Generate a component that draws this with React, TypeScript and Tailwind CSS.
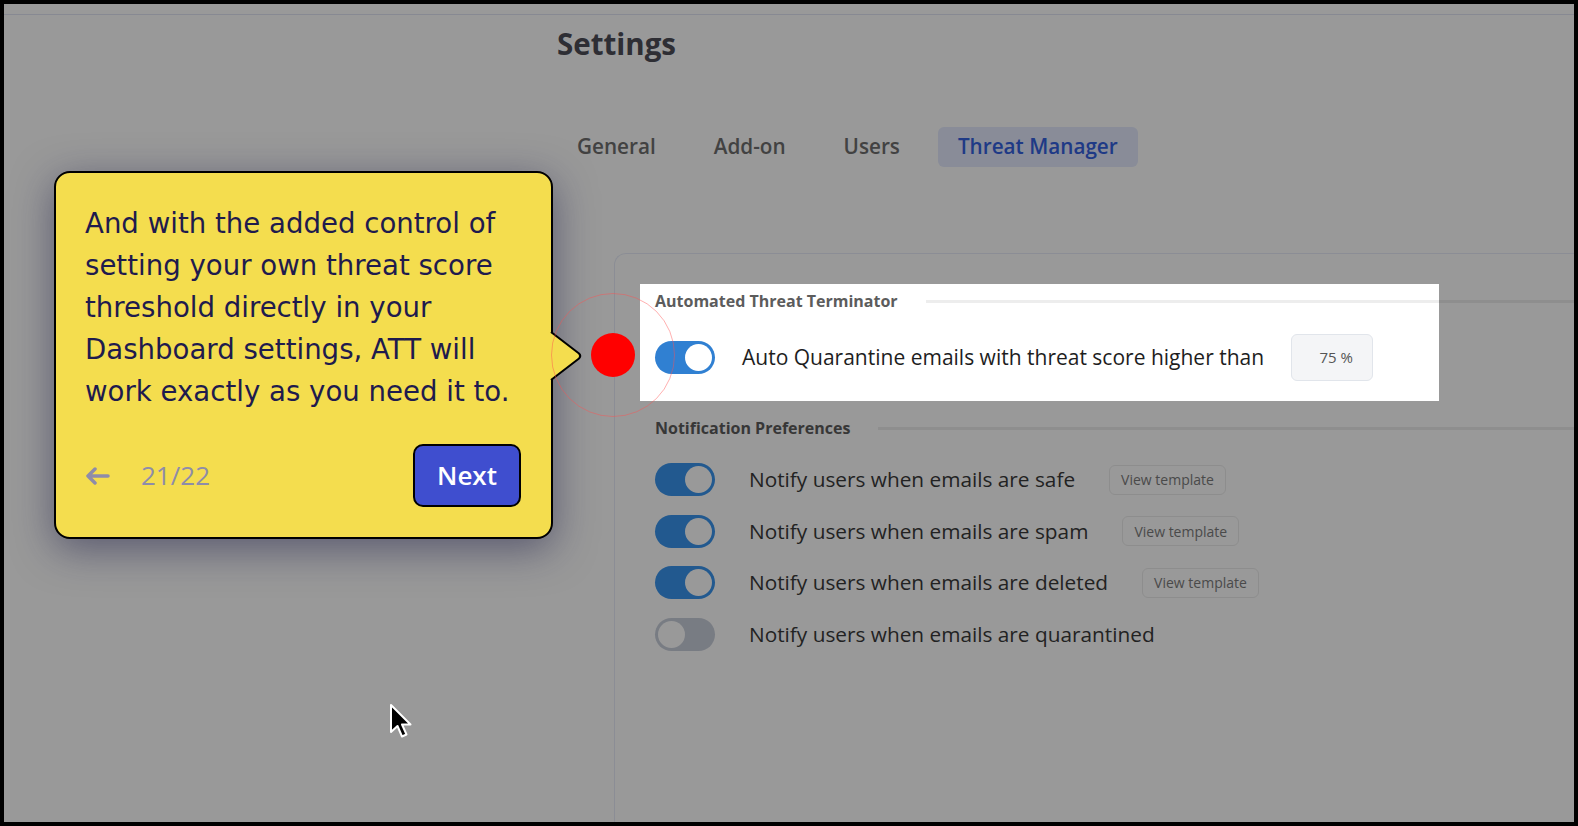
import { ReactNode } from 'react'

const tabs = ['General', 'Add-on', 'Users', 'Threat Manager']

const notifications = [
  { label: 'Notify users when emails are safe', on: true },
  { label: 'Notify users when emails are spam', on: true },
  { label: 'Notify users when emails are deleted', on: true },
  { label: 'Notify users when emails are quarantined', on: false },
]

const tourLines = [
  'And with the added control of',
  'setting your own threat score',
  'threshold directly in your',
  'Dashboard settings, ATT will',
  'work exactly as you need it to.',
]

function Toggle({ on, tone = 'bg-[#3994ee]' }: { on: boolean; tone?: string }) {
  return (
    <div
      className={`flex h-[33px] w-[60px] shrink-0 items-center rounded-full p-[3px] ${
        on ? `${tone} justify-end` : 'justify-start bg-[#c9cfdb]'
      }`}
    >
      <div className="h-[27px] w-[27px] rounded-full bg-white" />
    </div>
  )
}

function SectionHeader({ children }: { children: ReactNode }) {
  return (
    <div className="flex h-[18px] items-center">
      <span className="text-[16px] font-bold text-[#5c5c5c]">{children}</span>
      <div className="ml-[28px] h-[3px] flex-1 bg-[#ededed]" />
    </div>
  )
}

export default function App() {
  return (
    <div className="relative h-[826px] w-[1578px] overflow-hidden border-4 border-black bg-white font-['Open_Sans',sans-serif]">
      <div className="h-[11px] border-b border-[#e2e5f3]" />

      <main className="pl-[553px]">
        <h1 className="mt-[11px] text-[29.5px] font-bold leading-[36px] text-[#4d4d58]">Settings</h1>

        {/* tabs */}
        <nav className="mt-[65px] flex gap-[18px]">
          {tabs.map((t) => (
            <div
              key={t}
              className={`flex h-[40px] items-center rounded-md px-5 text-[20.7px] font-semibold ${
                t === 'Threat Manager' ? 'bg-[#e4eafe] text-[#3461e0]' : 'text-[#6e6e6e]'
              }`}
            >
              {t}
            </div>
          ))}
        </nav>

        {/* card */}
        <div className="ml-[57px] mt-[86px] h-[600px] w-[1000px] rounded-tl-xl border-l border-t border-[#e8ecf8] pl-[40px] pt-[38px]">
          <section className="relative">
            <div className="pointer-events-none absolute -left-[15px] -top-[8px] z-10 h-[117px] w-[799px] shadow-[0_0_0_3000px_rgba(0,0,0,0.4)]" />
            <SectionHeader>Automated Threat Terminator</SectionHeader>
            <div className="mt-[24px] flex h-[47px] items-center">
              <Toggle on tone="bg-[#3080d2]" />
              <span className="ml-[27px] text-[21px] text-[#1e1e1e]">
                Auto Quarantine emails with threat score higher than
              </span>
              <div className="ml-[27px] flex h-[47px] w-[82px] items-center justify-center rounded-md border border-[#e1e5eb] bg-[#f4f5f7] pl-2 text-[15px] text-[#555]">
                75 %
              </div>
            </div>
          </section>

          <section className="mt-[38px]">
            <SectionHeader>Notification Preferences</SectionHeader>
            <div className="mt-[17px] flex flex-col">
              {notifications.map((n) => (
                <div key={n.label} className="flex h-[51.5px] items-center">
                  <Toggle on={n.on} />
                  <span className="ml-[34px] text-[20.8px] text-[#3a3a3a]">{n.label}</span>
                  {n.on && (
                    <span className="ml-[34px] flex h-[30px] items-center rounded-md border border-[#ececec] px-[11px] text-[14px] text-[#7c7c7c]">
                      View template
                    </span>
                  )}
                </div>
              ))}
            </div>
          </section>
        </div>
      </main>

      {/* tour bubble */}
      <div className="absolute left-[50px] top-[167px] z-20 flex h-[368px] w-[499px] flex-col rounded-[16px] border-2 border-black bg-[#f4dd4e] px-[29px] pt-[30px] shadow-[0_10px_40px_rgba(25,25,70,0.5)]">
        <p className="font-['DejaVu_Sans',sans-serif] text-[27.6px] leading-[42px] text-[#1f1b4d]">
          {tourLines.map((l) => (
            <span key={l} className="block whitespace-nowrap">
              {l}
            </span>
          ))}
        </p>
        <div className="mt-[31px] flex items-center">
          <svg width="26" height="18" viewBox="0 0 26 18" fill="none" stroke="#8e8ca9" strokeWidth="3.5" strokeLinecap="round" strokeLinejoin="round">
            <path d="M23 9H3M10 2L3 9l7 7" />
          </svg>
          <span className="ml-[30px] text-[26px] text-[#8e8ca9]">21/22</span>
          <button className="ml-auto mr-[1px] flex h-[63px] w-[108px] items-center justify-center rounded-[10px] border-2 border-black bg-[#3f4ecf] text-[26px] font-semibold text-white">
            Next
          </button>
        </div>
      </div>

      {/* bubble pointer */}
      <svg className="absolute left-[546px] top-[327px] z-30" width="34" height="50" viewBox="0 0 34 50">
        <path d="M0 1 L29 22.5 Q31.5 25 29 27.5 L0 49 Z" fill="#f4dd4e" />
        <path d="M1 1 L29 22.5 Q31.5 25 29 27.5 L1 49" fill="none" stroke="#000" strokeWidth="2" strokeLinejoin="round" />
      </svg>

      {/* hotspot */}
      <div className="absolute left-[547px] top-[289px] z-30 h-[124px] w-[124px] rounded-full border-[1.5px] border-[rgba(255,80,80,0.45)]" />
      <div className="absolute left-[587px] top-[329px] z-30 h-[44px] w-[44px] rounded-full bg-[#ff0000]" />

      {/* mouse cursor */}
      <svg className="absolute left-[385px] top-[699px] z-30" width="24" height="38" viewBox="0 0 24 38">
        <path
          d="M2 2 L2 29 L8.5 23 L13 33.5 L17.5 31.5 L13 21.5 L21.5 21.5 Z"
          fill="#000"
          stroke="#fff"
          strokeWidth="2"
          strokeLinejoin="round"
        />
      </svg>
    </div>
  )
}
